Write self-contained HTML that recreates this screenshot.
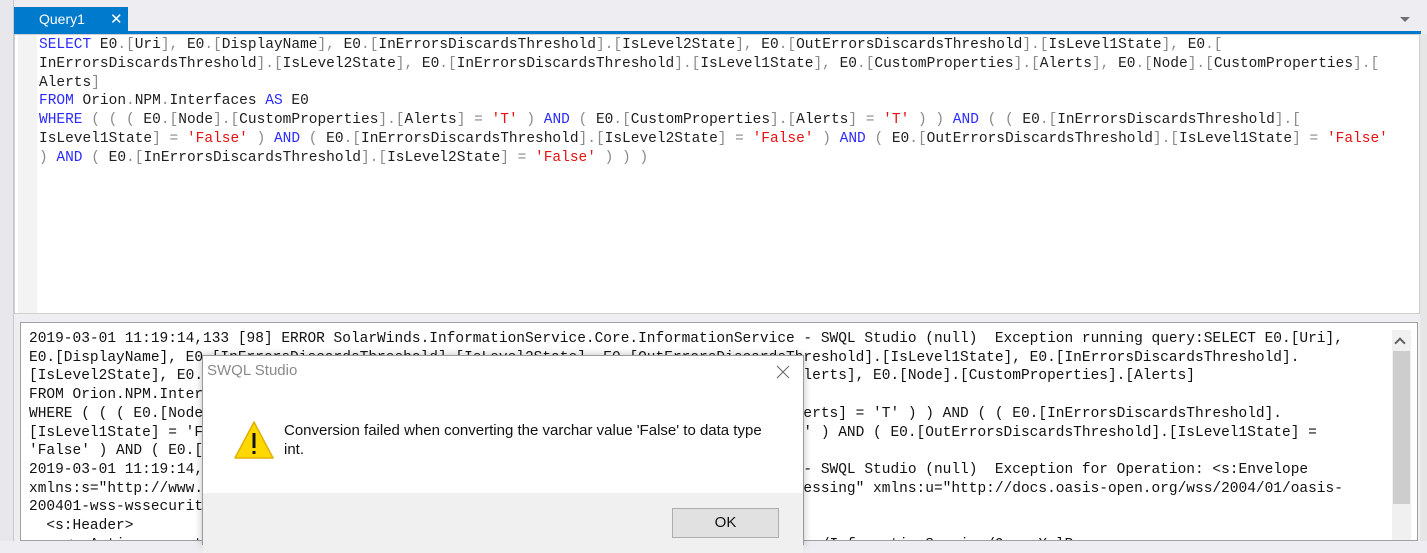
<!DOCTYPE html>
<html><head><style>
*{margin:0;padding:0;box-sizing:border-box}
body{width:1427px;height:541px;overflow:hidden;background:#eeeef2;position:relative;font-family:"Liberation Sans",sans-serif}
.abs{position:absolute}
.code{font-family:"Liberation Mono",monospace;font-size:14.5px;line-height:18.8px;white-space:pre;color:#1e1e1e}
.k{color:#2b2bff}.p{color:#8a8a8a}.s{color:#e81010}
.log{font-family:"Liberation Mono",monospace;font-size:14.5px;line-height:18.7px;white-space:pre;color:#111}
</style></head><body>
<div class="abs" style="left:0;top:0;width:14px;height:541px;background:#e8e8ec;border-right:1px solid #c8c8c8"></div>
<div class="abs" style="left:14px;top:7px;width:114px;height:25px;background:#007acc;color:#fff;font-size:14px;line-height:25px;padding-left:25px">Query1<span style="position:absolute;left:96px;top:0;font-size:15px">✕</span></div>
<div class="abs" style="left:14px;top:31px;width:1407px;height:3px;background:#007acc"></div>
<div class="abs" style="left:1400px;top:17px;width:0;height:0;border-left:5px solid transparent;border-right:5px solid transparent;border-top:5px solid #717171"></div>
<div class="abs" style="left:14px;top:34px;width:1406px;height:280px;background:#fff;border:1px solid #d0d0d0;overflow:hidden"></div>
<div class="abs" style="left:18px;top:35px;width:19px;height:278px;background:#f3f3f3"></div>
<div class="abs code" style="left:39px;top:36px"><span class="k">SELECT</span> E0<span class="p">.[</span>Uri<span class="p">],</span> E0<span class="p">.[</span>DisplayName<span class="p">],</span> E0<span class="p">.[</span>InErrorsDiscardsThreshold<span class="p">].[</span>IsLevel2State<span class="p">],</span> E0<span class="p">.[</span>OutErrorsDiscardsThreshold<span class="p">].[</span>IsLevel1State<span class="p">],</span> E0<span class="p">.[</span>
InErrorsDiscardsThreshold<span class="p">].[</span>IsLevel2State<span class="p">],</span> E0<span class="p">.[</span>InErrorsDiscardsThreshold<span class="p">].[</span>IsLevel1State<span class="p">],</span> E0<span class="p">.[</span>CustomProperties<span class="p">].[</span>Alerts<span class="p">],</span> E0<span class="p">.[</span>Node<span class="p">].[</span>CustomProperties<span class="p">].[</span>
Alerts<span class="p">]</span>
<span class="k">FROM</span> Orion<span class="p">.</span>NPM<span class="p">.</span>Interfaces <span class="k">AS</span> E0
<span class="k">WHERE</span> <span class="p">( ( (</span> E0<span class="p">.[</span>Node<span class="p">].[</span>CustomProperties<span class="p">].[</span>Alerts<span class="p">] =</span> <span class="s">'T'</span> <span class="p">)</span> <span class="k">AND</span> <span class="p">(</span> E0<span class="p">.[</span>CustomProperties<span class="p">].[</span>Alerts<span class="p">] =</span> <span class="s">'T'</span> <span class="p">) )</span> <span class="k">AND</span> <span class="p">( (</span> E0<span class="p">.[</span>InErrorsDiscardsThreshold<span class="p">].[</span>
IsLevel1State<span class="p">] =</span> <span class="s">'False'</span> <span class="p">)</span> <span class="k">AND</span> <span class="p">(</span> E0<span class="p">.[</span>InErrorsDiscardsThreshold<span class="p">].[</span>IsLevel2State<span class="p">] =</span> <span class="s">'False'</span> <span class="p">)</span> <span class="k">AND</span> <span class="p">(</span> E0<span class="p">.[</span>OutErrorsDiscardsThreshold<span class="p">].[</span>IsLevel1State<span class="p">] =</span> <span class="s">'False'</span>
<span class="p">)</span> <span class="k">AND</span> <span class="p">(</span> E0<span class="p">.[</span>InErrorsDiscardsThreshold<span class="p">].[</span>IsLevel2State<span class="p">] =</span> <span class="s">'False'</span> <span class="p">) ) )</span></div>
<div class="abs" style="left:20px;top:322px;width:1398px;height:219px;background:#fff;border:1px solid #a0a0a0;overflow:hidden">
<div class="abs log" style="left:8px;top:7px">2019-03-01 11:19:14,133 [98] ERROR SolarWinds.InformationService.Core.InformationService - SWQL Studio (null)  Exception running query:SELECT E0.[Uri],
E0.[DisplayName], E0.[InErrorsDiscardsThreshold].[IsLevel2State], E0.[OutErrorsDiscardsThreshold].[IsLevel1State], E0.[InErrorsDiscardsThreshold].
[IsLevel2State], E0.[InErrorsDiscardsThreshold].[IsLevel1State], E0.[CustomProperties].[Alerts], E0.[Node].[CustomProperties].[Alerts]
FROM Orion.NPM.Interfaces AS E0
WHERE ( ( ( E0.[Node].[CustomProperties].[Alerts] = 'T' ) AND ( E0.[CustomProperties].[Alerts] = 'T' ) ) AND ( ( E0.[InErrorsDiscardsThreshold].
[IsLevel1State] = 'False' ) AND ( E0.[InErrorsDiscardsThreshold].[IsLevel2State] = 'False' ) AND ( E0.[OutErrorsDiscardsThreshold].[IsLevel1State] =
'False' ) AND ( E0.[InErrorsDiscardsThreshold].[IsLevel2State] = 'False' ) ) ) RAW
2019-03-01 11:19:14,133 [98] ERROR SolarWinds.InformationService.Core.InformationService - SWQL Studio (null)  Exception for Operation: &lt;s:Envelope
xmlns:s="http://www.w3.org/2003/05/soap-envelope" xmlns:a="http://www.w3.org/2005/08/addressing" xmlns:u="http://docs.oasis-open.org/wss/2004/01/oasis-
200401-wss-wssecurity-utility-1.0.xsd"&gt;
  &lt;s:Header&gt;
    &lt;a:Action s:mustUnderstand="1"&gt;http://schemas.solarwinds.com/2007/08/informationservice/InformationService/QueryXmlResponse</div>
<div class="abs" style="left:1371px;top:7px;width:19px;height:212px;background:#f0f0f0"></div>
<div class="abs" style="left:1375px;top:16px;width:8px;height:8px;border-left:2px solid #606060;border-top:2px solid #606060;transform:rotate(45deg)"></div>
<div class="abs" style="left:1372px;top:15px;width:17px;height:153px;background:#cdcdcd;margin-top:13px"></div>
</div>
<div class="abs" style="left:1420px;top:34px;width:7px;height:507px;background:#e6e6e6"></div>
<div class="abs" style="left:202px;top:355px;width:602px;height:190px;background:#fff;border:1px solid #9a9a9a;box-shadow:0 0 8px rgba(0,0,0,0.25)">
<div class="abs" style="left:4px;top:6px;font-size:15px;color:#8a8a8a">SWQL Studio</div>
<svg class="abs" style="left:573px;top:9px" width="14" height="14" viewBox="0 0 14 14"><path d="M1 1 L13 13 M13 1 L1 13" stroke="#666" stroke-width="1"/></svg>
<svg class="abs" style="left:30px;top:64px" width="42" height="40" viewBox="0 0 42 40"><path d="M21 2 L40 38 L2 38 Z" fill="#ffd800" stroke="#e0b000" stroke-width="1.5" stroke-linejoin="round"/><rect x="19.5" y="13" width="3" height="15" fill="#111"/><rect x="19.5" y="31" width="3" height="3" fill="#111"/></svg>
<div class="abs" style="left:81px;top:65px;width:485px;font-size:15px;line-height:19px;color:#111">Conversion failed when converting the varchar value 'False' to data type int.</div>
<div class="abs" style="left:0;top:137px;width:600px;height:60px;background:#f0f0f0"></div>
<div class="abs" style="left:469px;top:152px;width:107px;height:30px;background:#e1e1e1;border:1px solid #adadad;font-size:15px;line-height:28px;text-align:center;color:#111">OK</div>
</div>
</body></html>
